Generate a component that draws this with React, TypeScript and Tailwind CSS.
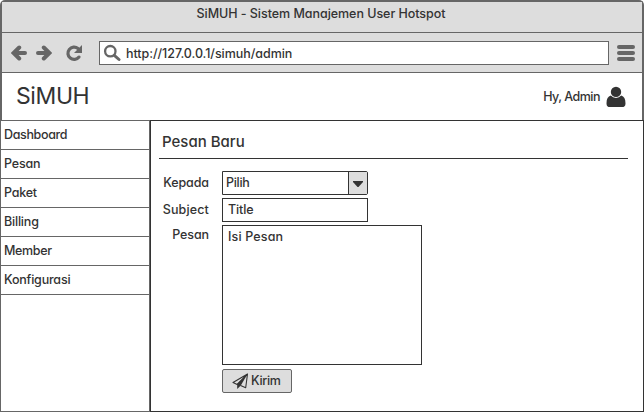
const menu = [
  { label: 'Dashboard', spacing: 'tracking-[-0.35px]' },
  { label: 'Pesan', spacing: 'tracking-[-0.2px]' },
  { label: 'Paket', spacing: 'tracking-[-0.25px]' },
  { label: 'Billing', spacing: 'tracking-[-0.2px]' },
  { label: 'Member', spacing: 'tracking-[-0.35px]' },
  { label: 'Konfigurasi', spacing: 'tracking-[-0.2px]' },
];

function Arrow({ flip = false }: { flip?: boolean }) {
  return (
    <svg width="16" height="16" viewBox="0 0 16 16" className={flip ? 'rotate-180' : ''}>
      <path d="M14 8H3.5M8.2 2.5 2.7 8l5.5 5.5" fill="none" stroke="#666" strokeWidth="4" strokeLinecap="round" strokeLinejoin="miter" />
    </svg>
  );
}

function Toolbar() {
  return (
    <div className="flex h-[40px] items-center border-b border-[#666] bg-[#ddd] pl-[9px] pr-[7px]">
      <Arrow />
      <span className="w-[9px]" />
      <Arrow flip />
      <svg width="18" height="18" viewBox="0 0 18 18" className="ml-[13px]">
        <path d="M14 13.1A6.2 6.2 0 1 1 13 4.4" fill="none" stroke="#666" strokeWidth="3.2" strokeLinecap="round" />
        <path d="M17 1v8H9z" fill="#666" />
      </svg>
      <div className="ml-[16px] flex h-[24px] flex-1 items-center border border-[#666] bg-white">
        <svg width="18" height="18" viewBox="0 0 18 18" className="ml-[3px]">
          <circle cx="7.3" cy="7.2" r="5.2" fill="none" stroke="#666" strokeWidth="2.3" />
          <path d="m11.3 11.3 4.7 4.2" stroke="#666" strokeWidth="3" strokeLinecap="round" />
        </svg>
        <span className="ml-[5px] mt-[2px] leading-[20px] tracking-[-0.05px]">http://127.0.0.1/simuh/admin</span>
      </div>
      <div className="ml-[8px] flex w-[18px] flex-col gap-[2px]">
        <span className="h-[4px] rounded-full bg-[#666]" />
        <span className="h-[4px] rounded-full bg-[#666]" />
        <span className="h-[4px] rounded-full bg-[#666]" />
      </div>
    </div>
  );
}

export default function App() {
  return (
    <div className="flex h-[412px] w-[644px] flex-col overflow-hidden bg-white font-['Inter','Liberation_Sans',sans-serif] text-[12.5px] font-[450] tracking-[-0.1px] text-[#333] [font-feature-settings:'cv11']">
      <div className="h-[120px] rounded-t-[5px] border-x-2 border-t-2 border-[#666]">
        <div className="h-[31px] border-b border-[#666] bg-[#ddd] pt-[2px] pr-[2px] text-center leading-[20px] tracking-[-0.04px]">
          SiMUH - Sistem Manajemen User Hotspot
        </div>
        <Toolbar />
        <header className="flex h-[47px] items-center justify-between pl-[14px] pr-[16px]">
          <h1 className="mb-[2px] text-[23px] font-normal leading-[30px] tracking-[-0.4px]">SiMUH</h1>
          <div className="flex items-center">
            <span className="mt-[2px] tracking-[-0.5px]">Hy, Admin</span>
            <svg width="20" height="22" viewBox="0 0 20 22" className="ml-[6px]">
              <circle cx="10" cy="5.9" r="5.2" fill="#333" />
              <path d="M4.8 9.6C2 10.4.5 13 .5 17.4.5 20 1.8 21 4 21h12c2.2 0 3.5-1 3.5-3.6 0-4.4-1.5-7-4.3-7.8a6.7 6.7 0 0 1-10.4 0z" fill="#333" />
            </svg>
          </div>
        </header>
      </div>
      <div className="flex flex-1">
        <nav className="w-[150px] border border-[#666]">
          {menu.map((item) => (
            <div key={item.label} className="h-[29px] border-b border-[#666] pl-[3px] leading-[27px]">
              <span className={item.spacing}>{item.label}</span>
            </div>
          ))}
        </nav>
        <main className="flex-1 border border-[#333] pl-[8px] pr-[15px]">
          <h2 className="h-[38px] border-b border-[#333] pl-[3px] text-[15px] leading-[41px] tracking-[0px]">Pesan Baru</h2>
          <div className="mt-[12px] grid grid-cols-[50px_200px] gap-x-[13px] gap-y-[3px]">
            <label className="text-right leading-[23px]">Kepada</label>
            <div className="flex h-[24px] w-[146px] rounded-r-[2px] border border-[#333]">
              <span className="flex-1 pl-[3px] leading-[22px] tracking-[-0.3px]">Pilih</span>
              <span className="flex w-[19px] items-center justify-center border-l border-[#333] bg-[#ddd]">
                <svg width="10" height="6" viewBox="0 0 10 6" className="mt-[2px]">
                  <path d="M0 0h10v1L5.5 6h-1L0 1z" fill="#333" />
                </svg>
              </span>
            </div>
            <label className="text-right leading-[23px] tracking-[0.15px]">Subject</label>
            <div className="h-[24px] w-[146px] border border-[#333] pl-[5px] leading-[22px] tracking-[-0.1px]">Title</div>
            <label className="text-right leading-[19px]">Pesan</label>
            <div className="h-[140px] border border-[#333] pl-[5px] leading-[22px] tracking-[0.15px]">Isi Pesan</div>
            <span />
            <button className="mt-[1px] flex h-[24px] w-[70px] items-center rounded-[2px] border border-[#666] bg-[#ddd] pl-[9px]">
              <svg width="17" height="17" viewBox="0 0 17 17">
                <path d="M15.5 1 1 9.5l4.2 2L15.5 1l-1.8 13.7-5.1-2.1" fill="none" stroke="#333" strokeWidth="1.1" strokeLinejoin="round" />
                <path d="M5.2 11V16L8.8 12.4 15.5 1z" fill="#333" />
              </svg>
              <span className="ml-[2px] leading-[20px] tracking-[-0.3px]">Kirim</span>
            </button>
          </div>
        </main>
      </div>
    </div>
  );
}
